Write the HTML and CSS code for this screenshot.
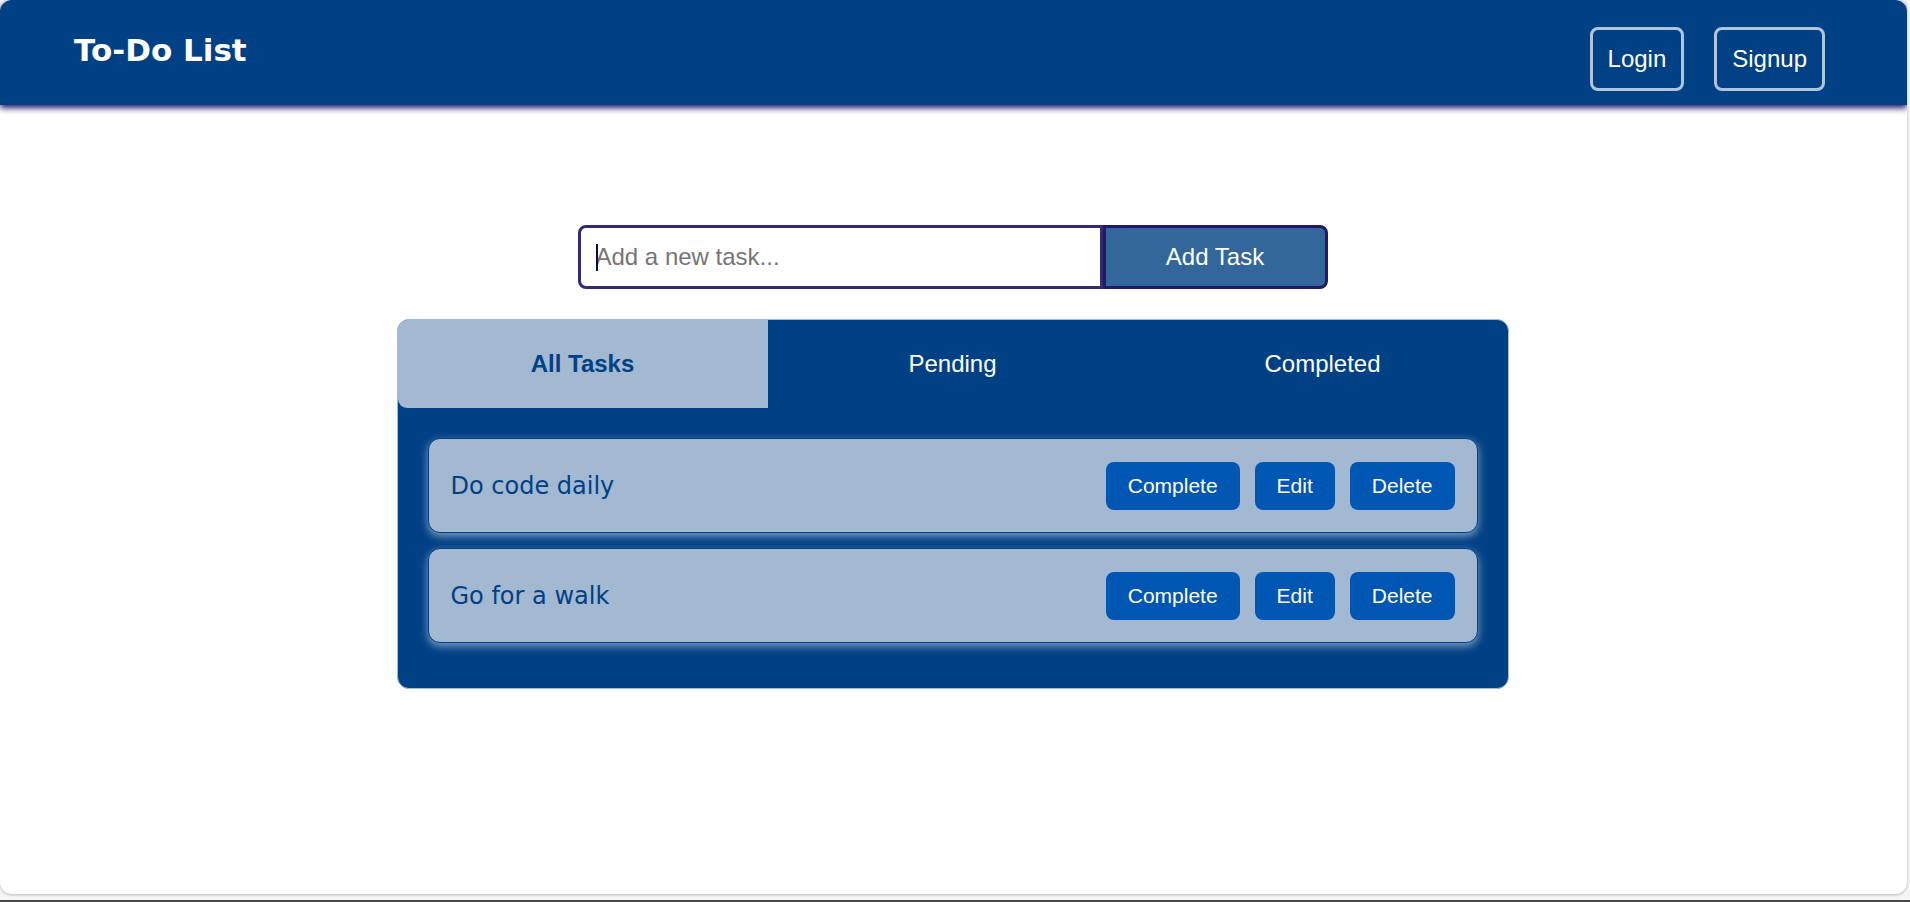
FILE: index.html
```html
<!DOCTYPE html>
<html lang="en">
<head>
<meta charset="utf-8">
<meta name="viewport" content="width=device-width, initial-scale=1">
<title>To-Do List</title>
<link rel="stylesheet" href="styles.css">
</head>
<body>
<div class="page">
  <header class="header">
    <h1 class="brand">To-Do List</h1>
    <nav class="auth">
      <a class="auth-link" href="#login">Login</a>
      <a class="auth-link" href="#signup">Signup</a>
    </nav>
  </header>
  <main class="content">
    <form class="add-form">
      <div class="field">
        <input class="task-input" type="text" aria-label="New task" placeholder="Add a new task...">
        <span class="caret"></span>
      </div>
      <button class="add-button" type="button">Add Task</button>
    </form>
    <section class="panel">
      <div class="tabs">
        <button class="tab tab-active" type="button">All Tasks</button>
        <button class="tab" type="button">Pending</button>
        <button class="tab" type="button">Completed</button>
      </div>
      <ul class="tasks">
        <li class="task">
          <span class="task-name">Do code daily</span>
          <div class="actions">
            <button class="action" type="button">Complete</button>
            <button class="action" type="button">Edit</button>
            <button class="action" type="button">Delete</button>
          </div>
        </li>
        <li class="task">
          <span class="task-name">Go for a walk</span>
          <div class="actions">
            <button class="action" type="button">Complete</button>
            <button class="action" type="button">Edit</button>
            <button class="action" type="button">Delete</button>
          </div>
        </li>
      </ul>
    </section>
  </main>
</div>
</body>
</html>
```
FILE: styles.css
```css
* {
  box-sizing: border-box;
}

body {
  display: flex;
  flex-direction: column;
  min-height: 100vh;
  margin: 0;
  padding: 0 3px 6px 0;
  border-bottom: 2px solid #48484a;
  background: #f5f5f5;
  font-family: "Liberation Sans", Arial, sans-serif;
  font-size: 24px;
}

button,
input {
  margin: 0;
  font: inherit;
}

.page {
  flex: 1;
  border-radius: 12px;
  background: #fff;
  box-shadow: 0 1px 3px rgba(0, 0, 0, 0.25);
}

.header {
  display: flex;
  justify-content: space-between;
  align-items: flex-start;
  height: 105px;
  padding: 27px 82px 0 74px;
  border-radius: 12px 12px 0 0;
  background: #004085;
  box-shadow: 0 3px 6px #1f1565;
  clip-path: inset(0 0 -12px 0);
}

.brand {
  margin: 0;
  color: #fff;
  font: bold 31px/46px Verdana, "DejaVu Sans", sans-serif;
}

.auth {
  display: flex;
  gap: 30px;
}

.auth-link {
  padding: 15px;
  border: 3px solid #b0c4de;
  border-radius: 8px;
  color: #fff;
  line-height: 28px;
  text-decoration: none;
}

.content {
  display: flex;
  flex-direction: column;
  align-items: center;
  gap: 30px;
  padding: 120px 32px 0 30px;
}

.add-form {
  display: flex;
  width: 100%;
  max-width: 750px;
  height: 64px;
}

.field {
  position: relative;
  flex: 1;
}

.task-input {
  width: 100%;
  height: 100%;
  padding: 0 15px;
  border: 3px solid #322a72;
  border-radius: 8px 0 0 8px;
  outline: 0;
  background: #fff;
}

.task-input::placeholder {
  color: #757575;
}

.caret {
  position: absolute;
  top: 19px;
  left: 18px;
  width: 2px;
  height: 27px;
  background: #0d0d3a;
}

.add-button {
  width: 30%;
  border: 3px solid #211a68;
  border-radius: 0 8px 8px 0;
  background: #33669a;
  color: #fff;
}

.panel {
  width: 100%;
  max-width: 1112px;
  border: 1px solid #a3b8d1;
  border-radius: 12px;
  background: #004085;
}

.tabs {
  display: grid;
  grid-template-columns: repeat(3, 1fr);
}

.tab {
  padding: 30px 0;
  border: 0;
  background: transparent;
  color: #fff;
  line-height: 28px;
}

.tab-active {
  border-radius: 9px 0 0 9px;
  background: #a3b8d1;
  color: #004085;
  font-weight: bold;
}

.tasks {
  display: flex;
  flex-direction: column;
  gap: 15px;
  margin: 0;
  padding: 30px 30px 45px;
  list-style: none;
}

.task {
  display: flex;
  justify-content: space-between;
  align-items: center;
  height: 95px;
  padding: 0 22px;
  border: 1px solid #004085;
  border-radius: 12px;
  background: #a3b8d1;
  box-shadow: 0 3px 8px rgba(255, 255, 255, 0.5);
}

.task-name {
  color: #004085;
  font-family: Verdana, "DejaVu Sans", sans-serif;
}

.actions {
  display: flex;
  gap: 15px;
}

.action {
  padding: 12px 22px;
  border: 0;
  border-radius: 8px;
  background: #0056b3;
  color: #fff;
  font-size: 21px;
  line-height: 24px;
}
```
